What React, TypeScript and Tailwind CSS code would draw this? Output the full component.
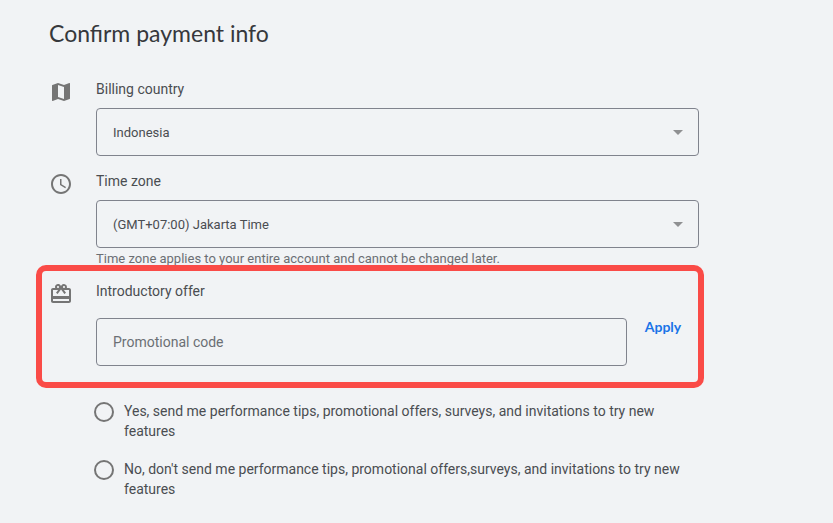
import type { ReactNode } from "react";
import { MdAccessTime, MdArrowDropDown, MdCardGiftcard, MdMap } from "react-icons/md";

const TIPS = [
  {
    value: "yes",
    text: "Yes, send me performance tips, promotional offers, surveys, and invitations to try new features",
  },
  {
    value: "no",
    text: "No, don't send me performance tips, promotional offers,surveys, and invitations to try new features",
  },
];

function Row({ icon, children }: { icon: ReactNode; children: ReactNode }) {
  return (
    <div className="flex items-start">
      <span className="mt-px w-[47px] shrink-0 text-2xl text-[#757575]">{icon}</span>
      <div className="min-w-0 flex-1">{children}</div>
    </div>
  );
}

function SelectField({ id, label, value }: { id: string; label: string; value: string }) {
  return (
    <>
      <label htmlFor={id} className="block leading-5">
        {label}
      </label>
      <div className="relative mt-[9px]">
        <select
          id={id}
          defaultValue={value}
          className="h-12 w-full appearance-none rounded border border-[#80838d] bg-transparent px-4 pt-0.5 text-[13px] text-[#4a4d51]"
        >
          <option>{value}</option>
        </select>
        <MdArrowDropDown className="pointer-events-none absolute top-3 right-[9px] size-6 text-[#8f9092]" />
      </div>
    </>
  );
}

export default function App() {
  return (
    <main className="min-h-screen bg-[#f1f3f5] font-['Roboto',sans-serif] text-sm text-[#4a4d51]">
      <form className="max-w-[699px] pt-[17px] pb-6 pl-[49px]" onSubmit={(e) => e.preventDefault()}>
        <h1 className="font-['Lato',sans-serif] text-[23px] leading-8 text-[#36383c]">Confirm payment info</h1>

        <div className="mt-[30px]">
          <Row icon={<MdMap />}>
            <SelectField id="country" label="Billing country" value="Indonesia" />
          </Row>
        </div>

        <div className="mt-[15px]">
          <Row icon={<MdAccessTime />}>
            <SelectField id="timezone" label="Time zone" value="(GMT+07:00) Jakarta Time" />
            <p className="mt-0.5 text-[13px] leading-[18px] text-[#6b6f74]">
              Time zone applies to your entire account and cannot be changed later.
            </p>
          </Row>
        </div>

        <div className="relative mt-[13px]">
          {/* highlight around the offer */}
          <div className="pointer-events-none absolute -top-4 -right-[5px] -bottom-[22px] -left-[13px] rounded-[10px] border-6 border-[#fa4b47]" />
          <Row icon={<MdCardGiftcard />}>
            <label htmlFor="promo" className="block leading-5">
              Introductory offer
            </label>
            <div className="mt-[17px] flex items-start">
              <input
                id="promo"
                type="text"
                placeholder="Promotional code"
                className="h-12 min-w-0 flex-1 rounded border border-[#80838d] bg-transparent px-4 placeholder:text-[#6b6f74]"
              />
              <button
                type="button"
                className="w-[72px] text-center font-['Lato',sans-serif] leading-[18px] font-bold text-[#1a73e8]"
              >
                Apply
              </button>
            </div>
          </Row>
        </div>

        <fieldset className="mt-[35px] ml-[45px] flex flex-col gap-[18px]">
          {TIPS.map((tip) => (
            <label key={tip.value} className="flex items-start gap-2.5 leading-5">
              <input
                type="radio"
                name="tips"
                value={tip.value}
                className="mt-px size-5 shrink-0 appearance-none rounded-full border-2 border-[#757575] checked:border-[6px] checked:border-[#1a73e8]"
              />
              <span>{tip.text}</span>
            </label>
          ))}
        </fieldset>
      </form>
    </main>
  );
}
